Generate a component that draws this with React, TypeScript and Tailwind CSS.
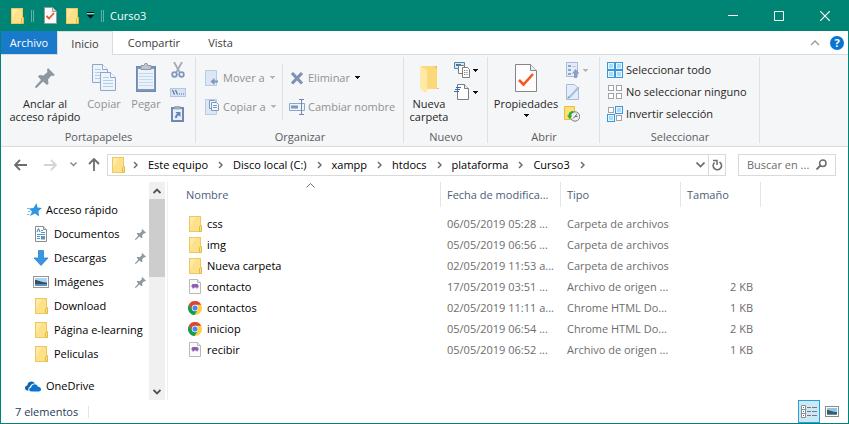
import type { ReactNode } from "react";

type IconProps = { className?: string };

/* ---------- shared icons ---------- */

function FolderIcon({ className = "" }: IconProps) {
  return (
    <svg className={`shrink-0 ${className}`} width="13" height="16" viewBox="0 0 13 16" aria-hidden="true">
      <rect x="0.5" y="0.5" width="11" height="15" fill="#fde08a" stroke="#ecc95c" />
      <path d="M1 1h6L1 11z" fill="#ffe9a4" />
      <path d="M10.500 15.500v-5l1-1h1v6z" fill="#fbe08a" stroke="#e5bb3f" />
    </svg>
  );
}

function CheckDocIcon() {
  return (
    <svg width="13" height="17" viewBox="0 0 13 17" aria-hidden="true">
      <path d="M.5.500h8l4 4v12H.5z" fill="#fafafa" stroke="#9a9a9a" />
      <path d="M8.500.5v4h4" fill="#dcdcdc" stroke="#9a9a9a" />
      <path d="M2.500 9l2.500 2.500L10 6" fill="none" stroke="#e2592c" strokeWidth="1.800" />
    </svg>
  );
}

function Arrow({ muted = false }: { muted?: boolean }) {
  return (
    <svg className="shrink-0" width="5" height="3" viewBox="0 0 5 3" shapeRendering="crispEdges" aria-hidden="true">
      <path d="M0 0h5v1H4v1H3v1H2V2H1V1H0z" fill={muted ? "#b4b4b4" : "#111"} />
    </svg>
  );
}

function Chevron({ className = "" }: IconProps) {
  return (
    <svg className={`shrink-0 ${className}`} width="5" height="8" viewBox="0 0 5 8" aria-hidden="true">
      <path d="M1 1l3 3-3 3" fill="none" stroke="#6d6d6d" strokeWidth="1.500" />
    </svg>
  );
}

function PinIcon({ size = 11 }: { size?: number }) {
  return (
    <svg className="shrink-0" width={size} height={size} viewBox="0 0 20 20" aria-hidden="true">
      <path
        d="M13 0l7 7-2 1-1.500-.5-3.500 4 .5 4-1.500 1.500-4-3.500L1.500 20 0 19.500.5 18 6 12 3 8.500 4.500 7l4 .5 4-3.500L12 2z"
        fill="#8e979e"
      />
    </svg>
  );
}

/* ---------- ribbon icons, large ---------- */

function BigPin() {
  return (
    <span className="flex size-8 items-center justify-center">
      <PinIcon size={20} />
    </span>
  );
}

function Page({ x, y }: { x: number; y: number }) {
  return (
    <g transform={`translate(${x} ${y})`}>
      <path d="M.5.5h10l5 5v13H.5z" fill="#eef4fb" stroke="#8ea6c8" />
      <path d="M10.500.5v5h5" fill="#fff" stroke="#8ea6c8" />
      <path d="M3 5.500h6M3 8.500h10M3 11.500h10M3 14.500h10" stroke="#b7cbe4" />
    </g>
  );
}

function CopyIcon() {
  return (
    <svg width="32" height="32" viewBox="0 0 32 32" aria-hidden="true">
      <Page x={4} y={2} />
      <Page x={12} y={10} />
    </svg>
  );
}

function PasteIcon() {
  return (
    <svg width="32" height="32" viewBox="0 0 32 32" aria-hidden="true">
      <rect x="6.500" y="4.500" width="19" height="25" fill="#7f97bd" stroke="#7188b1" />
      <rect x="8" y="7" width="16" height="20" fill="#eaf2fb" />
      <path d="M9 11.500h14M9 14.500h14M9 17.500h14M9 20.500h14M9 23.500h14" stroke="#c5d8ee" />
      <path d="M11 3.500h3l1-2h2l1 2h3v4H11z" fill="#c2c6cc" stroke="#8f98a6" />
    </svg>
  );
}

function NewFolderIcon() {
  return (
    <svg width="32" height="32" viewBox="0 0 32 32" aria-hidden="true">
      <path d="M8 4h16v22h2v1H8z" fill="#eebf55" />
      <path d="M8 4h13l3 3v20H12z" fill="#fbd978" />
      <path d="M7 4l7 4v22l-1 1-6-4z" fill="#ffe9a6" />
    </svg>
  );
}

function PropertiesIcon() {
  return (
    <svg width="32" height="32" viewBox="0 0 32 32" aria-hidden="true">
      <path d="M5.500 2.500h15l6 6v21h-21z" fill="#fdfdfd" stroke="#858585" />
      <path d="M20.500 2.500v6h6" fill="#ececec" stroke="#858585" />
      <path d="M9 18l4.500 4.500L23 12" fill="none" stroke="#f2591f" strokeWidth="2.600" />
    </svg>
  );
}

/* ---------- ribbon icons, small ---------- */

function Small({ children }: { children: ReactNode }) {
  return (
    <svg className="shrink-0" width="16" height="16" viewBox="0 0 16 16" aria-hidden="true">
      {children}
    </svg>
  );
}

const CutIcon = () => (
  <Small>
    <path d="M4 0l5.500 10M12 0L6.500 10" stroke="#a3aab5" strokeWidth="1.800" />
    <circle cx="4.500" cy="12.500" r="2.300" fill="none" stroke="#7f97bd" strokeWidth="1.800" />
    <circle cx="11.500" cy="12.500" r="2.300" fill="none" stroke="#7f97bd" strokeWidth="1.800" />
  </Small>
);

const CopyPathIcon = () => (
  <Small>
    <rect x=".5" y="4.500" width="15" height="8" fill="#d5e3f4" stroke="#b3c7e2" />
    <path d="M2.500 6l2 4.500M5.500 6l2 4.500" stroke="#5e7399" strokeWidth="1.200" />
    <path d="M9 10h1M11 10h1M13 10h1" stroke="#5e7399" />
  </Small>
);

const PasteShortcutIcon = () => (
  <Small>
    <rect x="2" y="2" width="11" height="13" fill="#e6effa" stroke="#7188b1" strokeWidth="2" />
    <path d="M4.500 0h6v3.500h-6z" fill="#9fa9b8" />
    <path d="M5 12c0-2 .5-3 2-4L5.500 6H10.500v5L9 9.500C7.500 9.500 7 10.500 7 12z" fill="#6a83b0" />
  </Small>
);

const MoveToIcon = () => (
  <Small>
    <path d="M1.500.5h11v15h-11z" fill="#dbe7f5" stroke="#b9cce5" />
    <path d="M14 10.500h-3.500V8L6.500 11.500l4 3.500v-2.500H14z" fill="#7f97bd" />
  </Small>
);

const CopyToIcon = () => (
  <Small>
    <path d="M1.500.5h11v15h-11z" fill="#dbe7f5" stroke="#b9cce5" />
    <path d="M5.500 1.500h5l1 1v7h-6z" fill="#f3f8fd" stroke="#7f97bd" />
    <path d="M7.500 3.500h5l2 2v6h-7z" fill="#f3f8fd" stroke="#7f97bd" />
    <path d="M9 6.500h4M9 8.500h4" stroke="#7f97bd" />
  </Small>
);

const DeleteIcon = () => (
  <Small>
    <path d="M3 3l10 10.500M13 3L3 13.500" stroke="#7e92b6" strokeWidth="3.200" />
  </Small>
);

const RenameIcon = () => (
  <Small>
    <path d="M.5 4.500h15v7H.5z" fill="#eef4fb" stroke="#8ea6c8" />
    <path d="M2 6.500h7v3H2z" fill="#7f97bd" />
    <path d="M12.500 1v14M10 .5h5M10 15.500h5" stroke="#7188b1" fill="none" />
  </Small>
);

const NewItemIcon = () => (
  <Small>
    <path d="M.5.500h10v6H.5z" fill="#d7ecfa" stroke="#4c87b5" />
    <path d="M2 3h5" stroke="#3d79aa" strokeWidth="2" />
    <path d="M4.500 3.500h6v8h-6z" fill="#fff" stroke="#7d7d7d" />
    <path d="M8.500 5.500h5l2 2v8h-7z" fill="#fff" stroke="#7d7d7d" />
    <path d="M10 8.500h1M10 10.500h1M10 12.500h1" stroke="#e0603a" />
    <path d="M11.500 8.500H14M11.500 10.500H14M11.500 12.500H14" stroke="#8fb6e6" />
  </Small>
);

const EasyAccessIcon = () => (
  <Small>
    <path d="M3.500.5h7l4 4v11h-11z" fill="#fff" stroke="#7d7d7d" />
    <path d="M10.500.5v4h4" fill="#eee" stroke="#7d7d7d" />
    <path d="M2 3.500h5M1 5.500h5M0 7.500h5" stroke="#2f6fb2" />
  </Small>
);

const OpenIcon = () => (
  <Small>
    <path d="M2.500.5h11v14h-11z" fill="#e3ecf8" stroke="#a7bcd9" />
    <path d="M4 3h3v2H4zM4 7h3v2H4zM4 11h3v2H4z" fill="#8ea6c8" />
    <path d="M8 4.500h4" stroke="#b7cbe4" />
    <path d="M13 16h-3v-4.500H8L11.500 7l4 4.500H13z" fill="#8ba0c6" />
  </Small>
);

const EditIcon = () => (
  <Small>
    <path d="M2.500.5h8l4 4v11h-12z" fill="#e3ecf8" stroke="#a7bcd9" />
    <path d="M4 13.500L14 2.500l1.500 1.500L6 14z" fill="#a7bcd9" />
    <path d="M3.500 14.500l2.500-.5-2-2z" fill="#7f97bd" />
  </Small>
);

const HistoryIcon = () => (
  <Small>
    <path d="M.5.500h10v13H.5z" fill="#fce07c" stroke="#e8bf3b" />
    <circle cx="11" cy="10.500" r="4.700" fill="#eceff1" stroke="#7b7b7b" />
    <path d="M11 10.500l2-2.500M11 10.500h2.500M9 12.500l2-2" stroke="#666" />
    <path d="M9.500 5C6 5 4.500 7 4.500 9.500H3L5.500 13 8.500 9.500H7C7 8 8 7 9.500 7z" fill="#2fae3b" />
  </Small>
);

function Tiles({ on }: { on: boolean[] }) {
  return (
    <Small>
      {on.map((active, i) => {
        const x = (i % 2) * 8;
        const y = Math.floor(i / 2) * 8;
        return active ? (
          <g key={i}>
            <rect x={x + 0.5} y={y + 0.5} width="7" height="7" fill="#e6f5fe" stroke="#3b97dd" />
            <rect x={x + 2} y={y + 2} width="4" height="4" fill="#a9dcfb" />
          </g>
        ) : (
          <rect key={i} x={x + 1.5} y={y + 1.5} width="5" height="5" fill="#fff" stroke="#a3a3a3" />
        );
      })}
    </Small>
  );
}

/* ---------- ribbon parts ---------- */

function Group({ label, className = "", children }: { label: string; className?: string; children: ReactNode }) {
  return (
    <section aria-label={label} className={`relative flex shrink-0 flex-col ${className}`}>
      <div className="flex h-[74px]">{children}</div>
      <div className="h-4 text-center leading-4 text-[#5c5c5c]">{label}</div>
      <span className="absolute top-0.5 right-0 h-[86px] w-px bg-[#e0e1e3]" />
    </section>
  );
}

function BigButton({
  icon,
  lines,
  muted = false,
  className = "",
  arrow = false,
}: {
  icon: ReactNode;
  lines: string[];
  muted?: boolean;
  className?: string;
  arrow?: boolean;
}) {
  return (
    <button
      type="button"
      className={`flex flex-col items-center pt-[7px] leading-[13px] whitespace-nowrap ${muted ? "text-[#919191]" : "text-[#262626]"} ${className}`}
    >
      {icon}
      <span className="mt-[3px]">
        {lines.map((line) => (
          <span key={line} className="block">
            {line}
          </span>
        ))}
      </span>
      {arrow && (
        <span className="mt-1">
          <Arrow />
        </span>
      )}
    </button>
  );
}

function SmallButton({
  icon,
  label,
  name,
  muted = false,
  arrow,
  tall = false,
}: {
  icon: ReactNode;
  label?: string;
  name?: string;
  muted?: boolean;
  arrow?: "dark" | "muted";
  tall?: boolean;
}) {
  return (
    <button
      type="button"
      aria-label={label ? undefined : name}
      className={`flex items-center gap-[3px] whitespace-nowrap ${tall ? "h-[29px]" : "h-[22px]"} ${muted ? "text-[#919191]" : "text-[#262626]"}`}
    >
      {icon}
      {label && <span>{label}</span>}
      {arrow && (
        <span className={label ? "ml-0.5" : ""}>
          <Arrow muted={arrow === "muted"} />
        </span>
      )}
    </button>
  );
}

/* ---------- side and list icons ---------- */

const StarIcon = () => (
  <svg className="shrink-0" width="15" height="14" viewBox="0 0 15 14" aria-hidden="true">
    <path d="M9.500 0l1 4.500 4.500.5-3.500 3 .5 5.500-4-3-5 2.500 2-4.500-3-3 4.500-.5z" fill="#2f95e0" />
    <path d="M0 5.500h3M1 8.500h2.500M0 11.500h2.500" stroke="#7bbdee" />
  </svg>
);

const DocumentIcon = () => (
  <svg className="shrink-0" width="16" height="16" viewBox="0 0 16 16" aria-hidden="true">
    <path d="M2.500.5h8l3 3v12h-11z" fill="#fff" stroke="#8b8b8b" />
    <path d="M10.500.5v3h3" fill="#e8e8e8" stroke="#8b8b8b" />
    <path d="M4 6l1.500-3.500L7 6" fill="none" stroke="#2f7fc4" />
    <path d="M8 4.500h2M8 6.500h4M4 8.500h8M4 10.500h3M4 12.500h3" stroke="#4f94d1" />
    <path d="M8 10h4v3.500H8z" fill="#5f92b8" />
  </svg>
);

const DownloadIcon = () => (
  <svg className="shrink-0" width="16" height="16" viewBox="0 0 16 16" aria-hidden="true">
    <path d="M5.500.5h5V8h4.500L8 15.500 1 8h4.500z" fill="#3a96e3" stroke="#2d83cd" strokeWidth=".8" />
  </svg>
);

const PictureIcon = () => (
  <svg className="shrink-0" width="16" height="12" viewBox="0 0 16 12" aria-hidden="true">
    <rect x=".5" y=".5" width="15" height="11" fill="#fff" stroke="#969696" />
    <path d="M2 2h12v4H2z" fill="#a9d4f5" />
    <path d="M2 4c3 0 5 2 12 2.500V8H2z" fill="#33505c" />
    <path d="M2 8h12v2H2z" fill="#5b8fc0" />
  </svg>
);

const CloudIcon = () => (
  <svg className="shrink-0" width="16" height="11" viewBox="0 0 16 11" aria-hidden="true">
    <path
      d="M2.500 9.500C.5 9.500 0 8 0 7c0-1.500 1-2.500 2.300-2.500C2.500 2 4.500.5 6.500.5c1.500 0 2.800.7 3.500 2C7.500 2 5.500 3.500 5 5.800 3.500 6.200 3 8 3.500 9.500z"
      fill="#0f62ae"
    />
    <path
      d="M6.500 10.500C5 10.500 4.200 9.500 4.200 8.500S5 6.500 6.200 6.500C6.300 4.500 8 3.200 9.700 3.200c1.600 0 2.800 1 3.200 2.500 1.700-.1 3.100 1 3.100 2.500 0 1.300-1 2.300-2.300 2.300z"
      fill="#0a74d1"
    />
  </svg>
);

const PhpIcon = () => (
  <svg width="12" height="15" viewBox="0 0 12 15" aria-hidden="true">
    <path d="M.5.500h8l3 3v11H.5z" fill="#fbfbfb" stroke="#b9b9b9" />
    <path d="M8.500.5v3h3" fill="#eee" stroke="#b9b9b9" />
    <path d="M2.500 6.500l1-1.500h4.500L9.500 6v2.500H8.500v1h-1V8.500H5.500l-1 1h-1V8.500l-1-.5z" fill="#8a5fae" />
  </svg>
);

const ChromeIcon = () => (
  <svg width="14" height="14" viewBox="0 0 14 14" aria-hidden="true">
    <circle cx="7" cy="7" r="7" fill="#ffcd40" />
    <path d="M7 3.800h6.200A7 7 0 0 0 .94 3.500L4.200 8.600z" fill="#db4437" />
    <path d="M.94 3.500A7 7 0 0 0 6.500 14L9.800 8.600H4.200z" fill="#0f9d58" />
    <circle cx="7" cy="7" r="3.200" fill="#f4f4f4" />
    <circle cx="7" cy="7" r="2.500" fill="#4285f4" />
  </svg>
);

const files = [
  { name: "css", date: "06/05/2019 05:28 ...", type: "Carpeta de archivos", size: "", icon: "folder" },
  { name: "img", date: "05/05/2019 06:56 ...", type: "Carpeta de archivos", size: "", icon: "folder" },
  { name: "Nueva carpeta", date: "02/05/2019 11:53 a...", type: "Carpeta de archivos", size: "", icon: "folder" },
  { name: "contacto", date: "17/05/2019 03:51 ...", type: "Archivo de origen ...", size: "2 KB", icon: "php" },
  { name: "contactos", date: "02/05/2019 11:11 a...", type: "Chrome HTML Do...", size: "1 KB", icon: "chrome" },
  { name: "iniciop", date: "05/05/2019 06:54 ...", type: "Chrome HTML Do...", size: "2 KB", icon: "chrome" },
  { name: "recibir", date: "05/05/2019 06:52 ...", type: "Archivo de origen ...", size: "1 KB", icon: "php" },
];

const places = [
  { name: "Documentos", icon: <DocumentIcon />, pinned: true },
  { name: "Descargas", icon: <DownloadIcon />, pinned: true },
  { name: "Imágenes", icon: <PictureIcon />, pinned: true },
  { name: "Download", icon: <FolderIcon className="mr-px" />, pinned: false },
  { name: "Página e-learning", icon: <FolderIcon className="mr-px" />, pinned: false },
  { name: "Peliculas", icon: <FolderIcon className="mr-px" />, pinned: false },
];

const crumbs = ["Este equipo", "Disco local (C:)", "xampp", "htdocs", "plataforma", "Curso3"];

function TitleBar() {
  return (
    <header className="flex h-[31px] items-center bg-[#008575] text-white">
      <FolderIcon className="ml-2.5" />
      <span className="ml-[7px] h-3 w-[3px] border-x border-[#5fb0a6]" />
      <button type="button" aria-label="Propiedades" className="ml-2.5">
        <CheckDocIcon />
      </button>
      <button type="button" aria-label="Nueva carpeta" className="ml-[9px]">
        <FolderIcon />
      </button>
      <button type="button" aria-label="Personalizar barra" className="ml-2">
        <svg width="7" height="7" viewBox="0 0 7 7" aria-hidden="true">
          <path d="M0 .500h7" stroke="#0b0b0b" />
          <path d="M0 1.500h7" stroke="#9fd0c9" />
          <path d="M0 3h7L3.500 6.500z" fill="#0b0b0b" />
        </svg>
      </button>
      <span className="ml-[7px] h-3 w-[3px] border-x border-[#5fb0a6]" />
      <h1 className="ml-1.5 grow">Curso3</h1>
      <button type="button" aria-label="Minimizar" className="flex h-full w-[46px] items-center justify-center">
        <svg width="10" height="10" viewBox="0 0 10 10" aria-hidden="true">
          <path d="M0 4.500h10" stroke="#fff" />
        </svg>
      </button>
      <button type="button" aria-label="Maximizar" className="flex h-full w-[46px] items-center justify-center">
        <svg width="10" height="10" viewBox="0 0 10 10" aria-hidden="true">
          <path d="M.5.500h9v9h-9z" fill="none" stroke="#fff" />
        </svg>
      </button>
      <button type="button" aria-label="Cerrar" className="flex h-full w-[46px] items-center justify-center">
        <svg width="10" height="10" viewBox="0 0 10 10" aria-hidden="true">
          <path d="M0 0l10 10M10 0L0 10" stroke="#fff" strokeWidth="1.200" />
        </svg>
      </button>
    </header>
  );
}

function Tabs() {
  return (
    <div className="flex h-6 text-[#3b3b3b]">
      <button type="button" className="w-14 border-b border-[#dadbdc] bg-[#1979ca] text-white">
        Archivo
      </button>
      <button type="button" className="w-14 border-x border-t border-[#dadbdc] bg-[#f5f6f7]">
        Inicio
      </button>
      <button type="button" className="w-[82px] border-b border-[#dadbdc]">
        Compartir
      </button>
      <button type="button" className="w-[51px] border-b border-[#dadbdc]">
        Vista
      </button>
      <div className="flex grow items-center justify-end gap-2.5 border-b border-[#dadbdc] pr-1">
        <button type="button" aria-label="Minimizar la cinta">
          <svg width="10" height="6" viewBox="0 0 10 6" aria-hidden="true">
            <path d="M1 5l4-4 4 4" fill="none" stroke="#9a9a9a" strokeWidth="1.400" />
          </svg>
        </button>
        <button
          type="button"
          aria-label="Ayuda"
          className="size-3.5 rounded-full bg-[#0a74d1] leading-[14px] font-bold text-white"
        >
          ?
        </button>
      </div>
    </div>
  );
}

function Ribbon() {
  return (
    <div className="flex border-b border-[#dadbdc] bg-[#f5f6f7] pb-px">
      <Group label="Portapapeles" className="w-[195px]">
        <BigButton className="ml-1 w-20" icon={<BigPin />} lines={["Anclar al", "acceso rápido"]} />
        <BigButton className="w-[38px]" icon={<CopyIcon />} lines={["Copiar"]} muted />
        <BigButton className="w-[46px]" icon={<PasteIcon />} lines={["Pegar"]} muted />
        <div className="ml-px pt-1">
          <SmallButton name="Cortar" icon={<CutIcon />} />
          <SmallButton name="Copiar ruta de acceso" icon={<CopyPathIcon />} />
          <SmallButton name="Pegar acceso directo" icon={<PasteShortcutIcon />} />
        </div>
      </Group>
      <Group label="Organizar" className="w-[208px]">
        <div className="w-[86px] pt-2 pl-2">
          <SmallButton tall muted label="Mover a" icon={<MoveToIcon />} arrow="muted" />
          <SmallButton tall muted label="Copiar a" icon={<CopyToIcon />} arrow="muted" />
        </div>
        <div className="mt-[9px] h-14 w-px bg-[#e0e1e3]" />
        <div className="pt-2 pl-1.5">
          <SmallButton tall muted label="Eliminar" icon={<DeleteIcon />} arrow="dark" />
          <SmallButton tall muted label="Cambiar nombre" icon={<RenameIcon />} />
        </div>
      </Group>
      <Group label="Nuevo" className="w-[84px]">
        <BigButton className="ml-0.5 w-[46px]" icon={<NewFolderIcon />} lines={["Nueva", "carpeta"]} />
        <div className="ml-0.5 pt-1">
          <SmallButton name="Nuevo elemento" icon={<NewItemIcon />} arrow="dark" />
          <SmallButton name="Fácil acceso" icon={<EasyAccessIcon />} arrow="dark" />
        </div>
      </Group>
      <Group label="Abrir" className="w-28">
        <BigButton className="ml-0.5 w-[72px]" icon={<PropertiesIcon />} lines={["Propiedades"]} arrow />
        <div className="ml-0.5 pt-1">
          <SmallButton name="Abrir" icon={<OpenIcon />} arrow="muted" />
          <SmallButton name="Modificar" icon={<EditIcon />} />
          <SmallButton name="Historial" icon={<HistoryIcon />} />
        </div>
      </Group>
      <Group label="Seleccionar" className="w-40">
        <div className="pt-1 pl-[7px]">
          <SmallButton label="Seleccionar todo" icon={<Tiles on={[true, true, true, true]} />} />
          <SmallButton label="No seleccionar ninguno" icon={<Tiles on={[false, false, false, false]} />} />
          <SmallButton label="Invertir selección" icon={<Tiles on={[false, true, true, false]} />} />
        </div>
      </Group>
    </div>
  );
}

function AddressRow() {
  return (
    <div className="flex h-[35px] items-center pr-3 pl-[13px]">
      <button type="button" aria-label="Atrás">
        <svg width="13" height="12" viewBox="0 0 13 12" aria-hidden="true">
          <path d="M1 6h12M6 1L1 6l5 5" fill="none" stroke="#6d6d6d" strokeWidth="1.800" />
        </svg>
      </button>
      <button type="button" aria-label="Adelante" className="ml-[17px]">
        <svg width="13" height="12" viewBox="0 0 13 12" aria-hidden="true">
          <path d="M0 6h12M7 1l5 5-5 5" fill="none" stroke="#d4d4d4" strokeWidth="1.800" />
        </svg>
      </button>
      <button type="button" aria-label="Ubicaciones recientes" className="ml-[13px]">
        <svg width="7" height="5" viewBox="0 0 7 5" aria-hidden="true">
          <path d="M.5.500l3 3 3-3" fill="none" stroke="#8a8a8a" strokeWidth="1.500" />
        </svg>
      </button>
      <button type="button" aria-label="Subir" className="ml-[11px]">
        <svg width="12" height="13" viewBox="0 0 12 13" aria-hidden="true">
          <path d="M6 1v12M1 6l5-5 5 5" fill="none" stroke="#6d6d6d" strokeWidth="1.800" />
        </svg>
      </button>
      <nav
        aria-label="Ruta"
        className="ml-[7px] flex h-[22px] grow items-center border border-[#d9d9d9] pl-1 text-black"
      >
        <FolderIcon />
        <ol className="-ml-0.5 flex grow items-center whitespace-nowrap">
          {crumbs.map((crumb) => (
            <li key={crumb} className="flex items-center">
              <Chevron className="mx-2.5" />
              <a href="#">{crumb}</a>
            </li>
          ))}
          <li>
            <Chevron className="ml-2.5" />
          </li>
        </ol>
        <button type="button" aria-label="Ubicaciones anteriores" className="mr-[3px]">
          <svg width="9" height="6" viewBox="0 0 9 6" aria-hidden="true">
            <path d="M.5.500l4 4 4-4" fill="none" stroke="#6d6d6d" strokeWidth="1.700" />
          </svg>
        </button>
        <button
          type="button"
          aria-label="Actualizar"
          className="flex h-full w-[17px] items-center justify-center border-l border-[#d9d9d9]"
        >
          <svg width="11" height="12" viewBox="0 0 11 12" aria-hidden="true">
            <path d="M2.500 3.500A4.200 4.200 0 1 0 7.500 3" fill="none" stroke="#6d6d6d" strokeWidth="1.600" />
            <path d="M1 1.500h4v4.500" fill="none" stroke="#6d6d6d" strokeWidth="1.500" />
          </svg>
        </button>
      </nav>
      <div className="ml-3 flex h-[22px] w-[98px] items-center border border-[#d9d9d9] px-2">
        <input
          type="text"
          aria-label="Buscar"
          placeholder="Buscar en ..."
          className="w-0 min-w-0 grow outline-none placeholder:text-[#6d6d6d]"
        />
        <svg className="shrink-0" width="11" height="11" viewBox="0 0 11 11" aria-hidden="true">
          <circle cx="6.800" cy="4.200" r="3.200" fill="none" stroke="#6d6d6d" strokeWidth="1.500" />
          <path d="M4.500 6.500L.5 10.500" stroke="#6d6d6d" strokeWidth="1.800" />
        </svg>
      </div>
    </div>
  );
}

function Sidebar() {
  return (
    <aside className="flex w-[167px] shrink-0 border-r border-[#f0f0f0] pr-0.5 text-black">
      <nav aria-label="Navegación" className="w-[148px] pt-4 whitespace-nowrap">
        <a href="#" className="flex h-6 items-center gap-1 pl-[26px]">
          <StarIcon />
          Acceso rápido
        </a>
        {places.map((place) => (
          <a key={place.name} href="#" className="flex h-6 items-center gap-[5px] pr-[3px] pl-8">
            <span className="flex w-4 shrink-0 justify-end">{place.icon}</span>
            <span className="grow">{place.name}</span>
            {place.pinned && <PinIcon />}
          </a>
        ))}
        <a href="#" className="mt-2 flex h-6 items-center gap-[5px] pl-6">
          <CloudIcon />
          <span>OneDrive</span>
        </a>
      </nav>
      <div className="flex w-4 flex-col items-center bg-[#f0f0f0]">
        <span className="flex h-[17px] items-center">
          <svg width="8" height="6" viewBox="0 0 8 6" aria-hidden="true">
            <path d="M.5 5L4 1.500 7.500 5" fill="none" stroke="#505050" strokeWidth="1.800" />
          </svg>
        </span>
        <span className="h-[78px] w-full bg-[#cdcdcd]" />
        <span className="mt-auto flex h-[17px] items-center">
          <svg width="8" height="6" viewBox="0 0 8 6" aria-hidden="true">
            <path d="M.5 1L4 4.500 7.500 1" fill="none" stroke="#505050" strokeWidth="1.800" />
          </svg>
        </span>
      </div>
    </aside>
  );
}

function FileTable() {
  const head = "h-[25px] border-r border-[#e5e5e5] pl-1.5 text-left font-normal";
  return (
    <div className="min-w-0 grow">
      <table className="w-full table-fixed border-separate border-spacing-0 whitespace-nowrap">
        <colgroup>
          <col className="w-[273px]" />
          <col className="w-[120px]" />
          <col className="w-[120px]" />
          <col className="w-20" />
          <col />
        </colgroup>
        <thead className="text-[#4c607a]">
          <tr>
            <th className="relative h-[25px] border-r border-[#e5e5e5] pl-[18px] text-left font-normal">
              Nombre
              <svg className="absolute top-px left-[138px]" width="9" height="5" viewBox="0 0 9 5" aria-hidden="true">
                <path d="M.5 4.500l4-4 4 4" fill="none" stroke="#6d6d6d" />
              </svg>
            </th>
            <th className={head}>Fecha de modifica...</th>
            <th className={head}>Tipo</th>
            <th className={head}>Tamaño</th>
            <td />
          </tr>
        </thead>
        <tbody className="text-[#6d6d6d] before:block before:h-1.5 before:content-['']">
          {files.map((file) => (
            <tr key={file.name} className="h-[21px]">
              <td className="p-0 pl-5 text-black">
                <span className="flex h-[21px] items-center gap-[5px]">
                  <span className="flex w-3.5 justify-center">
                    {file.icon === "folder" && <FolderIcon className="ml-px" />}
                    {file.icon === "php" && <PhpIcon />}
                    {file.icon === "chrome" && <ChromeIcon />}
                  </span>
                  {file.name}
                </span>
              </td>
              <td className="p-0 pl-1.5">{file.date}</td>
              <td className="p-0 pl-1.5">{file.type}</td>
              <td className="p-0 pr-2 text-right">{file.size}</td>
              <td />
            </tr>
          ))}
        </tbody>
      </table>
    </div>
  );
}

function StatusBar() {
  return (
    <footer className="flex h-[23px] items-center pr-[5px] pl-3.5 text-[#1e395b]">
      <span>7 elementos</span>
      <span className="ml-2.5 h-3 w-px bg-[#e5e5e5]" />
      <button
        type="button"
        aria-label="Detalles"
        aria-pressed="true"
        className="ml-auto flex h-[23px] w-[22px] items-center justify-center border border-[#26a0da] bg-[#cbe8f6]"
      >
        <svg width="16" height="13" viewBox="0 0 16 13" aria-hidden="true">
          <path d="M.5.500h4v12h-4zM.5 4.500h4M.5 8.500h4" fill="#fff" stroke="#8b8b8b" />
          <path d="M2 2.500h1" stroke="#3c8f4a" />
          <path d="M2 6.500h1" stroke="#2f7fc4" />
          <path d="M2 10.500h1" stroke="#d13a2b" />
          <path d="M6 2.500h4M11 2.500h5M6 6.500h4M11 6.500h5M6 10.500h4M11 10.500h5" stroke="#7a7a7a" />
        </svg>
      </button>
      <button type="button" aria-label="Iconos grandes" className="ml-px flex h-[23px] w-[22px] items-center justify-center">
        <svg width="14" height="11" viewBox="0 0 14 11" aria-hidden="true">
          <rect x=".5" y=".5" width="13" height="10" fill="#fff" stroke="#8b8b8b" />
          <path d="M2 2h10v4H2z" fill="#8fc4f0" />
          <path d="M2 4c3 0 5 2 10 2v3H2z" fill="#3c5f5c" />
          <path d="M2 8h10v1H2z" fill="#5b8fc0" />
        </svg>
      </button>
    </footer>
  );
}

export default function App() {
  return (
    <div className="flex min-h-screen flex-col border-x border-b border-[#008575] bg-white font-['Open_Sans','Noto_Sans',sans-serif] text-[11px] leading-4">
      <TitleBar />
      <Tabs />
      <Ribbon />
      <AddressRow />
      <main className="flex grow">
        <Sidebar />
        <FileTable />
      </main>
      <StatusBar />
    </div>
  );
}
